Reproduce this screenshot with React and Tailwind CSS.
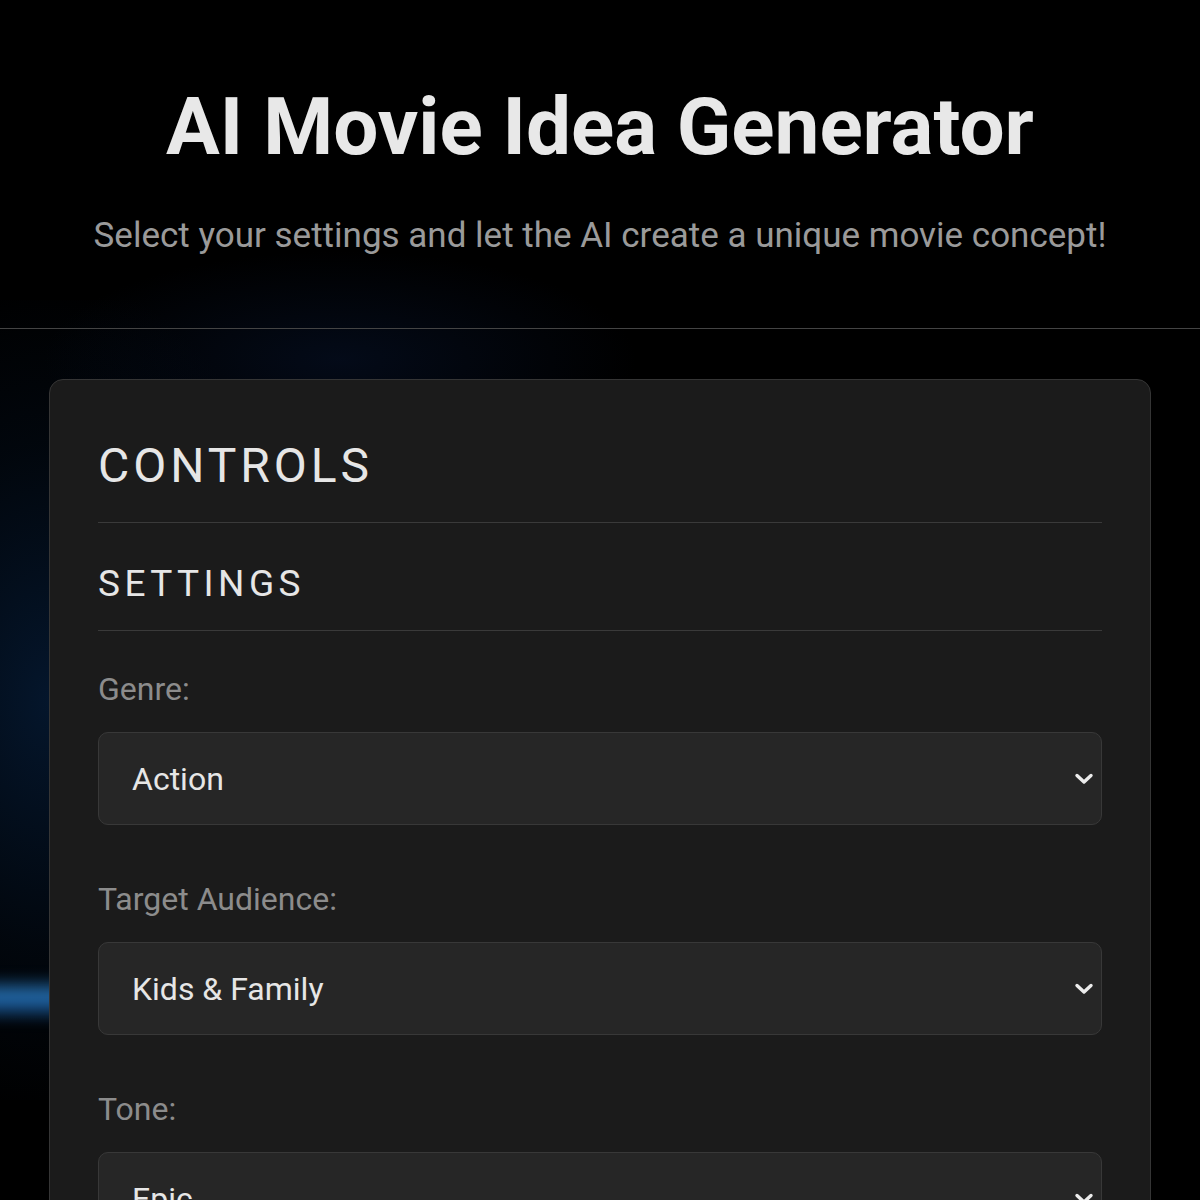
import React from "react";

function Chevron() {
  return (
    <svg width="22" height="14" viewBox="0 0 22 14" className="pointer-events-none absolute right-[7px] top-1/2 -translate-y-1/2">
      <path d="M4 3.5 L11 10 L18 3.5" fill="none" stroke="#ececec" strokeWidth="3.4" strokeLinecap="round" strokeLinejoin="round" />
    </svg>
  );
}

function Field({ label, value, options }) {
  return (
    <div className="flex flex-col">
      <label className="text-[32px] leading-[48px] text-[#8c8c8c] mb-[19px]">{label}</label>
      <div className="relative">
        <select
          defaultValue={value}
          className="w-full h-[93px] appearance-none rounded-[10px] border border-[#383838] bg-[#262626] pl-[33px] pr-12 text-[32px] text-[#e6e6e6] outline-none"
          style={{ fontFamily: "Roboto, sans-serif" }}
        >
          {options.map((o) => (
            <option key={o}>{o}</option>
          ))}
        </select>
        <Chevron />
      </div>
    </div>
  );
}

export default function App() {
  return (
    <div className="relative min-h-[1200px] overflow-hidden bg-black font-['Roboto',sans-serif]">
      {/* decorative background light */}
      <div className="pointer-events-none absolute inset-0">
        <div className="absolute left-[-200px] top-[300px] h-[800px] w-[500px] bg-[radial-gradient(ellipse_at_center,rgba(8,40,80,0.55)_0%,rgba(4,18,36,0.35)_45%,transparent_75%)]" />
        <div className="absolute left-[40px] top-[250px] h-[220px] w-[600px] bg-[radial-gradient(ellipse_at_center,rgba(10,30,70,0.35)_0%,transparent_70%)]" />
        <div className="absolute left-[-20px] top-[975px] h-[48px] w-[90px] blur-[6px] bg-[linear-gradient(180deg,transparent_0%,rgba(40,120,190,0.9)_45%,rgba(30,100,170,0.8)_60%,transparent_100%)]" />
      </div>

      <header className="relative flex h-[329px] flex-col items-center border-b border-[#444] pt-[82px]">
        <h1 className="text-[80px] font-bold leading-[90px] tracking-[0px] text-[#e8e8e8]">AI Movie Idea Generator</h1>
        <p className="mt-[44px] text-[35px] leading-[40px] text-[#9a9a9a]">
          Select your settings and let the AI create a unique movie concept!
        </p>
      </header>

      <main className="relative px-[49px] pt-[50px]">
        <section className="rounded-[14px] border border-[#353535] bg-[#1b1b1b] px-[48px] pt-[50px] pb-[60px]">
          <h2 className="text-[48px] leading-[72px] tracking-[0.082em] text-[#e6e6e6]">CONTROLS</h2>
          <div className="mt-[20px] h-px bg-[#3a3a3a]" />
          <h3 className="mt-[36px] text-[37px] leading-[50px] tracking-[0.12em] text-[#e6e6e6]">SETTINGS</h3>
          <div className="mt-[21px] h-px bg-[#3a3a3a]" />
          <div className="mt-[34px] flex flex-col gap-[50px]">
            <Field label="Genre:" value="Action" options={["Action", "Comedy", "Drama", "Horror", "Sci-Fi", "Romance"]} />
            <Field label="Target Audience:" value="Kids & Family" options={["Kids & Family", "Teens", "Adults"]} />
            <Field label="Tone:" value="Epic" options={["Epic", "Dark", "Lighthearted", "Suspenseful"]} />
          </div>
        </section>
      </main>
    </div>
  );
}
